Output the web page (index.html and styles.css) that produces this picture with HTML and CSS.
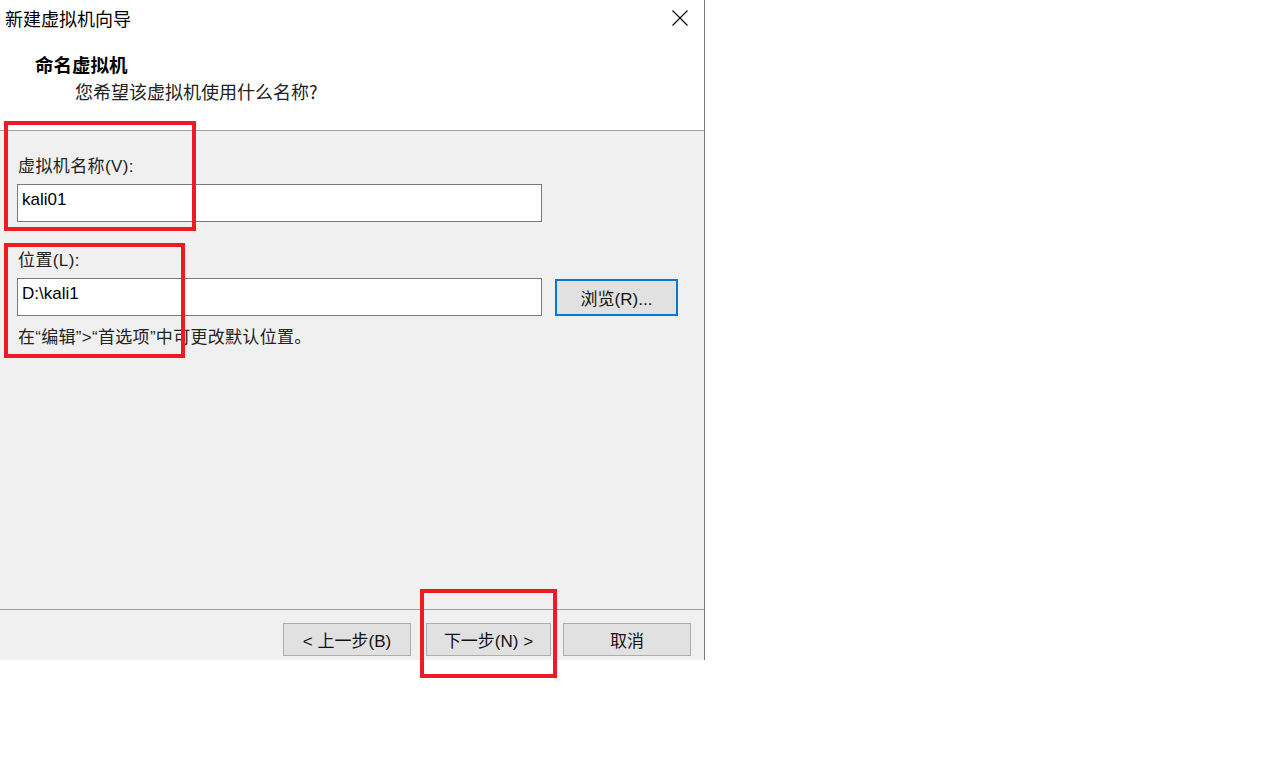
FILE: index.html
```html
<!DOCTYPE html>
<html lang="zh-CN">
<head>
<meta charset="utf-8">
<title>新建虚拟机向导</title>
<link rel="stylesheet" href="styles.css">
</head>
<body>
<div class="page">
  <div class="dialog">
    <div class="titlebar">
      <span class="title">新建虚拟机向导</span>
      <svg class="close" width="16" height="16" viewBox="0 0 16 16"><path d="M0.5 0.5 L15.5 15.5 M15.5 0.5 L0.5 15.5" stroke="#000" stroke-width="1.1" fill="none"/></svg>
    </div>
    <div class="header">
      <div class="h-title">命名虚拟机</div>
      <div class="h-sub">您希望该虚拟机使用什么名称?</div>
    </div>
    <div class="content">
      <div class="label">虚拟机名称(V):</div>
      <div class="row">
        <div class="input">kali01</div>
      </div>
      <div class="label label2">位置(L):</div>
      <div class="row">
        <div class="input">D:\kali1</div>
        <div class="btn browse">浏览(R)...</div>
      </div>
      <div class="hint">在“编辑”&gt;“首选项”中可更改默认位置。</div>
    </div>
    <div class="footer">
      <div class="btn fbtn prev">&lt; 上一步(B)</div>
      <div class="btn fbtn next">下一步(N) &gt;</div>
      <div class="btn fbtn cancel">取消</div>
    </div>
  </div>
  <div class="mark mark1"></div>
  <div class="mark mark2"></div>
  <div class="mark mark3"></div>
</div>
</body>
</html>
```
FILE: styles.css
```css
html, body {
  margin: 0;
  padding: 0;
  background: #ffffff;
}
body {
  font-family: "Liberation Sans", "Noto Sans CJK SC", sans-serif;
  color: #000;
}
.page {
  position: relative;
  width: 1275px;
  height: 767px;
}
.dialog {
  width: 704px;
  border-right: 1px solid #7a7a7a;
}
.titlebar {
  height: 36px;
  display: flex;
  align-items: center;
  justify-content: space-between;
  padding: 0 16px 0 5px;
  background: #fff;
}
.title {
  font-family: "Noto Sans CJK SC", sans-serif;
  font-size: 18px;
  line-height: 22px;
  color: #000;
}
.close {
  display: block;
  margin-top: -1px;
}
.header {
  height: 95px;
  box-sizing: border-box;
  padding: 17px 0 0 35px;
  background: #fff;
  border-bottom: 1px solid #a0a0a0;
}
.h-title {
  font-family: "Noto Sans CJK SC", sans-serif;
  font-weight: bold;
  font-size: 18.5px;
  line-height: 22px;
}
.h-sub {
  font-family: "Noto Sans CJK SC", sans-serif;
  font-size: 18px;
  line-height: 22px;
  margin: 5px 0 0 40px;
  color: #222;
}
.content {
  height: 479px;
  box-sizing: border-box;
  background: #f0f0f0;
  padding: 26px 0 0 17px;
  border-bottom: 1px solid #a0a0a0;
}
.label {
  font-size: 17px;
  line-height: 20px;
  padding-left: 1px;
  color: #222;
  letter-spacing: 0.4px;
}
.label2 {
  margin-top: 29px;
}
.row {
  display: flex;
  align-items: center;
  gap: 13px;
  margin-top: 7px;
}
.label2 + .row {
  margin-top: 6px;
}
.input {
  width: 525px;
  height: 38px;
  box-sizing: border-box;
  border: 1px solid #7a7a7a;
  background: #fff;
  font-size: 17px;
  line-height: 20px;
  padding: 5px 0 0 4px;
}
.btn {
  box-sizing: border-box;
  background: #e1e1e1;
  border: 1px solid #adadad;
  display: flex;
  align-items: center;
  justify-content: center;
  font-size: 17px;
  color: #111;
}
.browse {
  width: 123px;
  height: 37px;
  border: 2px solid #0078d7;
  margin-top: 2px;
}
.hint {
  margin-top: 12px;
  font-size: 17px;
  line-height: 20px;
  padding-left: 1px;
  color: #222;
  letter-spacing: 0.3px;
}
.footer {
  height: 50px;
  background: #f0f0f0;
  display: flex;
  justify-content: flex-end;
  align-items: flex-start;
  padding: 13px 13px 0 0;
  box-sizing: border-box;
}
.fbtn {
  height: 33px;
}
.prev { width: 128px; }
.next { width: 125px; margin-left: 15px; }
.cancel { width: 128px; margin-left: 12px; }
.mark {
  position: absolute;
  border: 4px solid #ed1c24;
  box-sizing: border-box;
}
.mark1 { left: 4px; top: 121px; width: 192px; height: 110px; }
.mark2 { left: 4px; top: 243px; width: 181px; height: 115px; }
.mark3 { left: 420px; top: 589px; width: 137px; height: 89px; }
```
